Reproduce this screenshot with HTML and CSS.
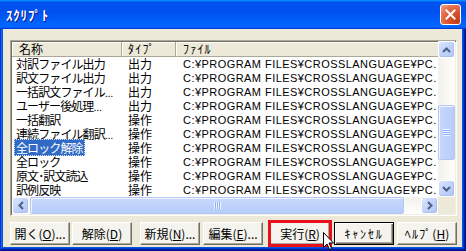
FILE: index.html
```html
<!DOCTYPE html>
<html lang="ja">
<head>
<meta charset="utf-8">
<title>ｽｸﾘﾌﾟﾄ</title>
<link rel="stylesheet" href="styles.css">
</head>
<body>
<div class="window">
  <div class="titlebar">
    <span class="title">ｽｸﾘﾌﾟﾄ</span>
    <button class="close" aria-label="閉じる">
      <svg width="11" height="11" viewBox="0 0 11 11"><path d="M1.5 1.5 L9.5 9.5 M9.5 1.5 L1.5 9.5" stroke="#fff" stroke-width="2" stroke-linecap="square"/></svg>
    </button>
  </div>
  <div class="body">
    <div class="listbox">
      <div class="view">
        <div class="header">
          <div class="hcell c1">名称</div>
          <div class="hcell c2"><span class="kana">ﾀｲﾌﾟ</span></div>
          <div class="hcell c3"><span class="kana">ﾌｧｲﾙ</span></div>
        </div>
        <div class="rows">
          <div class="row"><span class="c1"><span class="name">対訳ファイル出力</span></span><span class="c2">出力</span><span class="c3 path">C:¥PROGRAM FILES¥CROSSLANGUAGE¥PC.</span></div>
          <div class="row"><span class="c1"><span class="name">訳文ファイル出力</span></span><span class="c2">出力</span><span class="c3 path">C:¥PROGRAM FILES¥CROSSLANGUAGE¥PC.</span></div>
          <div class="row"><span class="c1"><span class="name">一括訳文ファイル<span class="dots">...</span></span></span><span class="c2">出力</span><span class="c3 path">C:¥PROGRAM FILES¥CROSSLANGUAGE¥PC.</span></div>
          <div class="row"><span class="c1"><span class="name">ユーザー後処理<span class="dots">...</span></span></span><span class="c2">出力</span><span class="c3 path">C:¥PROGRAM FILES¥CROSSLANGUAGE¥PC.</span></div>
          <div class="row"><span class="c1"><span class="name">一括翻訳</span></span><span class="c2">操作</span><span class="c3 path">C:¥PROGRAM FILES¥CROSSLANGUAGE¥PC.</span></div>
          <div class="row"><span class="c1"><span class="name">連続ファイル翻訳<span class="dots">...</span></span></span><span class="c2">操作</span><span class="c3 path">C:¥PROGRAM FILES¥CROSSLANGUAGE¥PC.</span></div>
          <div class="row"><span class="c1"><span class="name sel">全ロック解除</span></span><span class="c2">操作</span><span class="c3 path">C:¥PROGRAM FILES¥CROSSLANGUAGE¥PC.</span></div>
          <div class="row"><span class="c1"><span class="name">全ロック</span></span><span class="c2">操作</span><span class="c3 path">C:¥PROGRAM FILES¥CROSSLANGUAGE¥PC.</span></div>
          <div class="row"><span class="c1"><span class="name">原文･訳文読込</span></span><span class="c2">操作</span><span class="c3 path">C:¥PROGRAM FILES¥CROSSLANGUAGE¥PC.</span></div>
          <div class="row"><span class="c1"><span class="name">訳例反映</span></span><span class="c2">操作</span><span class="c3 path">C:¥PROGRAM FILES¥CROSSLANGUAGE¥PC.</span></div>
        </div>
      </div>
      <div class="vscroll">
        <div class="arrow"><svg width="9" height="6" viewBox="0 0 9 6"><path d="M1 5 L4.5 1.5 L8 5" fill="none" stroke="#4D6185" stroke-width="2"/></svg></div>
        <div class="track vtrack">
          <div class="thumb vthumb"><span class="grip"></span></div>
        </div>
        <div class="arrow"><svg width="9" height="6" viewBox="0 0 9 6"><path d="M1 1 L4.5 4.5 L8 1" fill="none" stroke="#4D6185" stroke-width="2"/></svg></div>
      </div>
      <div class="hscroll">
        <div class="arrow"><svg width="6" height="9" viewBox="0 0 6 9"><path d="M5 1 L1.5 4.5 L5 8" fill="none" stroke="#4D6185" stroke-width="2"/></svg></div>
        <div class="track htrack">
          <div class="thumb hthumb"><span class="grip"></span></div>
        </div>
        <div class="arrow"><svg width="6" height="9" viewBox="0 0 6 9"><path d="M1 1 L4.5 4.5 L1 8" fill="none" stroke="#4D6185" stroke-width="2"/></svg></div>
      </div>
      <div class="corner"></div>
    </div>
    <div class="buttons">
      <button class="btn">開く(<u>O</u>)...</button>
      <button class="btn g2">解除(<u>D</u>)</button>
      <button class="btn g8">新規(<u>N</u>)...</button>
      <button class="btn g3">編集(<u>E</u>)...</button>
      <button class="btn g7 marked">実行(<u>R</u>)
        <svg class="cursor" width="12" height="19" viewBox="0 0 12 19"><path d="M0.5 0.5 L0.5 15.5 L4 12 L6.5 17.5 L8.5 16.5 L6 11 L10.5 11 Z" fill="#fff" stroke="#000" stroke-width="1"/></svg>
      </button>
      <button class="btn g4 default"><span class="kana wide">ｷｬﾝｾﾙ</span></button>
      <button class="btn g3"><span class="kana">ﾍﾙﾌﾟ</span>(<u>H</u>)</button>
    </div>
  </div>
</div>
</body>
</html>
```
FILE: styles.css
```css
* { box-sizing: border-box; }
html, body { margin: 0; padding: 0; }
body {
  width: 466px;
  height: 251px;
  overflow: hidden;
  font-family: "Noto Sans CJK JP", sans-serif;
  font-size: 12px;
  color: #000;
  background: #0855DD;
}
.window {
  width: 466px;
  height: 251px;
  display: flex;
  flex-direction: column;
  background: #0855DD;
  box-shadow: inset -1px -1px #00138C, inset 1px 1px #0831D9, inset -2px -2px #001EA0, inset 2px 2px #166AEE, inset -3px -3px #003BDA, inset 3px 3px #0855DD;
}
.titlebar {
  flex: none;
  height: 29px;
  display: flex;
  align-items: center;
  justify-content: space-between;
  padding: 0 5px 0 6px;
  background: linear-gradient(180deg, #0997FF, #0053EE 8%, #0050EE 40%, #0066FF 88%, #0066FF 93%, #005BFF 95%, #003DD7 96%, #003DD7);
}
.title {
  color: #fff;
  font-weight: bold;
  font-size: 13px;
  line-height: 16px;
  text-shadow: 1px 1px #0F1089;
  letter-spacing: 0.8px;
}
.close {
  width: 21px;
  height: 21px;
  padding: 0;
  border: 1px solid #fff;
  border-radius: 3px;
  display: flex;
  align-items: center;
  justify-content: center;
  background: radial-gradient(circle at 85% 85%, #C33E14 0%, #DE5630 45%, #E57352 70%, #EFA68C 100%);
}
.body {
  flex: 1;
  margin: 0 4px 4px 3px;
  background: #ECE9D8;
  padding: 11px 5px 0 7px;
  display: flex;
  flex-direction: column;
}
.listbox {
  height: 176px;
  background: #fff;
  border: 1px solid;
  border-color: #ACA899 #fff #fff #ACA899;
  box-shadow: inset 1px 1px #716F64, inset -1px -1px #F1EFE2;
  padding: 0 1px 1px 1px;
  display: grid;
  grid-template-columns: 1fr 17px;
  grid-template-rows: 1fr 17px;
}
.view {
  overflow: hidden;
  min-width: 0;
  min-height: 0;
}
.header {
  display: flex;
  height: 16px;
  background: #ECE9D8;
  border-top: 1px solid #716F64;
  border-bottom: 1px solid #ACA899;
}
.hcell {
  line-height: 14px;
  border-right: 1px solid #ACA899;
  box-shadow: inset 1px 1px #fff;
  white-space: nowrap;
}
.hcell.c1 { padding-left: 7px; }
.hcell.c2 { padding-left: 6px; }
.hcell.c3 { padding-left: 7px; flex: 1; border-right: 0; }
.kana { letter-spacing: 1.2px; }
.kana.wide { letter-spacing: 1.8px; }
.c1 { width: 110px; flex: none; }
.c2 { width: 54px; flex: none; }
.c3 { flex: 1; }
.row {
  display: flex;
  height: 14px;
  line-height: 14px;
  white-space: nowrap;
}
.row .c1 { padding-left: 2px; }
.row .c2 { padding-left: 6px; }
.row .c3 { padding-left: 7px; }
.name { padding: 0 2px; letter-spacing: -0.9px; }
.dots {
  font-family: "Liberation Sans", Arial, sans-serif;
  font-size: 11px;
  letter-spacing: -0.3px;
}
.sel {
  background: #316AC5;
  color: #fff;
  outline: 1px dotted #D6E2F7;
  outline-offset: -1px;
}
.path {
  font-family: "Liberation Sans", Arial, sans-serif;
  font-size: 11px;
  letter-spacing: 0.45px;
}
.vscroll, .hscroll { display: flex; }
.vscroll { flex-direction: column; background: linear-gradient(90deg, #F3F1EC, #FEFEFB); }
.hscroll { background: linear-gradient(180deg, #F3F1EC, #FEFEFB); }
.arrow {
  flex: none;
  width: 17px;
  height: 17px;
  display: flex;
  align-items: center;
  justify-content: center;
  border: 1px solid #fff;
  border-radius: 3px;
  background: linear-gradient(135deg, #DCE6FD, #C1D3FB 50%, #B4C8F7);
  box-shadow: inset -1px -1px #A9BEEE;
}
.track { flex: 1; display: flex; }
.vtrack { flex-direction: column; }
.thumb {
  border: 1px solid #B4C8F6;
  border-radius: 2px;
  display: flex;
  align-items: center;
  justify-content: center;
  box-shadow: inset 1px 1px #F0F4FE;
}
.vthumb {
  margin-top: 47px;
  height: 55px;
  background: linear-gradient(90deg, #C9D8FC, #BED1FB 60%, #B8CCF9);
}
.hthumb {
  margin-left: 1px;
  width: 374px;
  background: linear-gradient(180deg, #C9D8FC, #BED1FB 60%, #B8CCF9);
}
.grip { display: block; }
.vthumb .grip {
  width: 7px;
  height: 7px;
  background: repeating-linear-gradient(180deg, #EEF4FE 0 1px, #8CB0F8 1px 2px);
}
.hthumb .grip {
  width: 7px;
  height: 7px;
  background: repeating-linear-gradient(90deg, #EEF4FE 0 1px, #8CB0F8 1px 2px);
}
.corner { background: #ECE9D8; }
.buttons {
  display: flex;
  margin-top: 6px;
}
.btn {
  position: relative;
  width: 60px;
  height: 23px;
  padding: 0;
  font-family: "Noto Sans CJK JP", sans-serif;
  font-size: 12px;
  line-height: 20px;
  color: #000;
  background: #F4F3EE;
  border: 1px solid;
  border-color: #fff #716F64 #716F64 #fff;
  box-shadow: inset -1px -1px #ACA899;
  white-space: nowrap;
}
.btn u { text-underline-offset: 1px; }
.g2 { margin-left: 2px; }
.g3 { margin-left: 3px; }
.g4 { margin-left: 4px; }
.g7 { margin-left: 7px; }
.g8 { margin-left: 8px; }
.default {
  border-color: #000;
  box-shadow: inset 1px 1px #fff, inset -1px -1px #716F64, inset -2px -2px #ACA899;
}
.marked {
  outline: 3px solid #E8101A;
  outline-offset: -1px;
}
.cursor {
  position: absolute;
  left: 52px;
  top: 9px;
}
```
